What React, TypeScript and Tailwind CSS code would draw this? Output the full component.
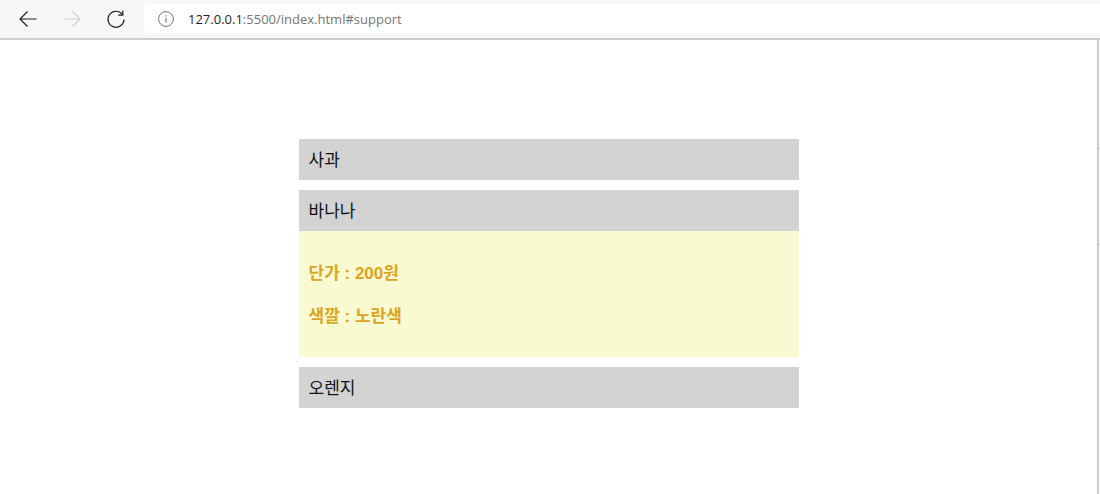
import React from 'react';

const koreanFont = "font-['Liberation_Sans','Noto_Sans_CJK_KR',sans-serif]";

const App: React.FC = () => {
  return (
    <div className={`h-[494px] w-[1100px] overflow-hidden bg-white flex flex-col ${koreanFont}`}>
      {/* Browser toolbar */}
      <div className="h-[40px] shrink-0 bg-[#f7f7f7] border-b-2 border-[#cccccc] flex items-start pt-[4px]">
        <div className="w-[144px] h-[30px] shrink-0 flex items-center">
          <svg className="ml-[18px]" width="20" height="20" viewBox="0 0 20 20" fill="none" stroke="#1f1f1f" strokeWidth="1.2">
            <path d="M18.5 10H2M9.5 2.5 2 10l7.5 7.5" />
          </svg>
          <svg className="ml-[24px]" width="20" height="20" viewBox="0 0 20 20" fill="none" stroke="#d0d0d0" strokeWidth="1.2">
            <path d="M1.5 10H18M10.5 2.5 18 10l-7.5 7.5" />
          </svg>
          <svg className="ml-[24px]" width="20" height="20" viewBox="0 0 20 20" fill="none" stroke="#1f1f1f" strokeWidth="1.2">
            <path d="M16.2 5.2A8 8 0 1 0 18 10.5" />
            <path d="M16.8 1.5v4.6h-4.6" />
          </svg>
        </div>
        <div className="flex-1 h-[29px] bg-white rounded-l-[5px] flex items-center pl-[14px]">
          <svg width="16" height="16" viewBox="0 0 16 16" fill="none" stroke="#757575" strokeWidth="1">
            <circle cx="8" cy="8" r="7.4" />
            <path d="M8 7v4.5M8 4.2v1.3" strokeWidth="1.2" />
          </svg>
          <span className="ml-[14px] mt-[1px] text-[13px] leading-[29px] text-[#757575] font-['Open_Sans',sans-serif]">
            <span className="text-[#1f1f1f]">127.0.0.1</span>:5500/index.html#support
          </span>
        </div>
      </div>

      {/* Page */}
      <div className="flex-1 flex min-h-0">
        <div className="flex-1 pt-[99px] flex flex-col items-center">
          <div className="w-[500px] flex flex-col gap-[10px]">
            <div className="h-[41px] bg-[#d3d3d3] px-[10px] pt-[2px] flex items-center text-[17px] text-[#111]">사과</div>
            <div>
              <div className="h-[41px] bg-[#d3d3d3] px-[10px] pt-[2px] flex items-center text-[17px] text-[#111]">바나나</div>
              <div className="h-[126px] bg-[#fafad2] px-[10px] pt-[3px] flex flex-col justify-center gap-[17px] text-[17px] leading-[26px] font-bold text-[#daa520]">
                <p>단가 : 200원</p>
                <p>색깔 : 노란색</p>
              </div>
            </div>
            <div className="h-[41px] bg-[#d3d3d3] px-[10px] pt-[2px] flex items-center text-[17px] text-[#111]">오렌지</div>
          </div>
        </div>
        {/* Cropped scrollbar edge */}
        <div className="w-[3px] shrink-0 border-l-2 border-[#cccccc] pt-[108px]">
          <div className="h-px bg-[#cccccc]" />
          <div className="h-px mt-[95px] bg-[#cccccc]" />
        </div>
      </div>
    </div>
  );
};

export default App;
